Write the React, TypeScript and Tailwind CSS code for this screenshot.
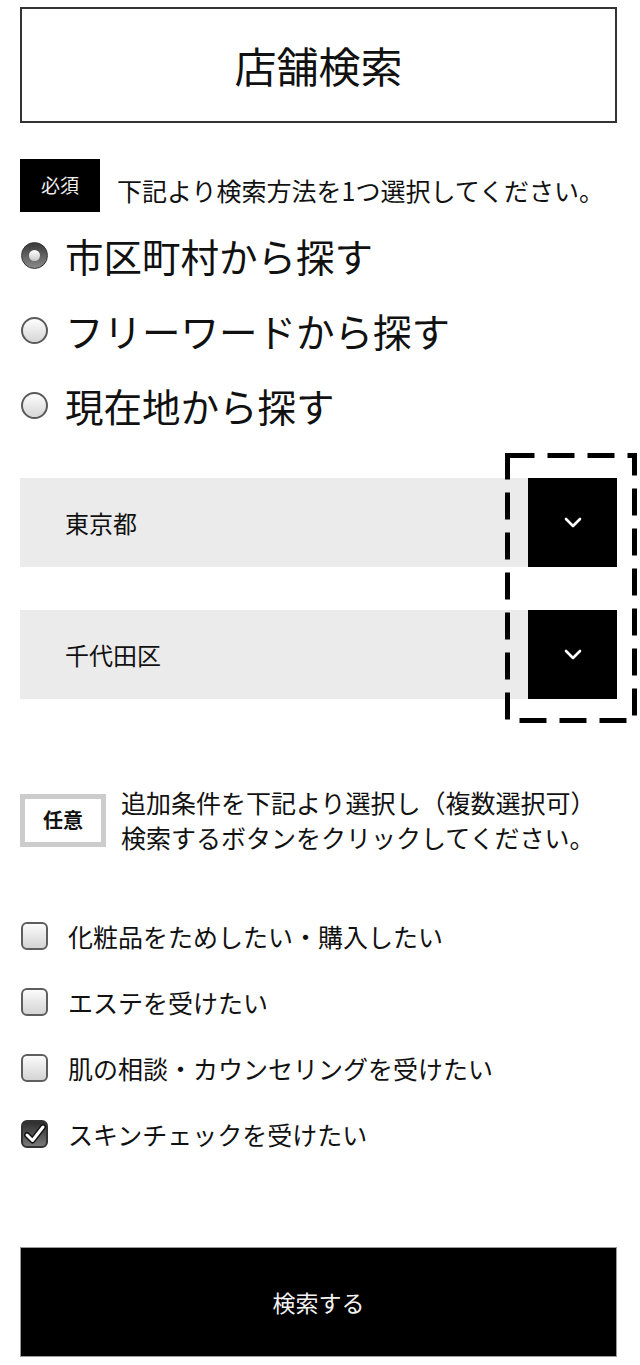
import React from "react";

const font = { fontFamily: '"Noto Sans CJK JP", "Noto Sans", sans-serif' };

function Radio({ checked }: { checked?: boolean }) {
  if (checked) {
    return (
      <span className="flex h-[27px] w-[27px] shrink-0 items-center justify-center rounded-full border border-[#333] bg-gradient-to-b from-[#3a3a3a] to-[#8a8a8a]">
        <span className="h-[11px] w-[11px] rounded-full bg-gradient-to-b from-[#ffffff] to-[#c8c8c8]" />
      </span>
    );
  }
  return (
    <span className="h-[27px] w-[27px] shrink-0 rounded-full border-2 border-[#5a5a5a] bg-gradient-to-b from-[#fdfdfd] to-[#d6d6d6]" />
  );
}

function Checkbox({ checked }: { checked?: boolean }) {
  if (checked) {
    return (
      <span className="flex h-[28px] w-[27px] shrink-0 items-center justify-center rounded-[6px] border-2 border-[#333] bg-gradient-to-b from-[#2e2e2e] to-[#7a7a7a]">
        <svg width="22" height="20" viewBox="0 0 22 20">
          <path d="M3 11 L8.5 16.5 L19 3" fill="none" stroke="#111" strokeWidth="6" strokeLinecap="round" strokeLinejoin="round" />
          <path d="M3 11 L8.5 16.5 L19 3" fill="none" stroke="#fff" strokeWidth="3" strokeLinecap="round" strokeLinejoin="round" />
        </svg>
      </span>
    );
  }
  return (
    <span className="h-[28px] w-[27px] shrink-0 rounded-[6px] border-2 border-[#5e5e5e] bg-gradient-to-b from-[#fbfbfb] to-[#d4d4d4]" />
  );
}

function Chevron() {
  return (
    <svg width="18" height="11" viewBox="0 0 18 11">
      <path d="M2 2 L9 9 L16 2" fill="none" stroke="#fff" strokeWidth="2.6" strokeLinecap="round" strokeLinejoin="round" />
    </svg>
  );
}

function Select({ label }: { label: string }) {
  return (
    <div className="flex h-[89px] w-full items-stretch bg-[#ebebeb]">
      <div className="flex flex-1 items-center pl-[45px] text-[24px] text-[#111]">{label}</div>
      <div className="flex w-[89px] items-center justify-center bg-black">
        <Chevron />
      </div>
    </div>
  );
}

export default function App() {
  const radios = [
    { label: "市区町村から探す", checked: true },
    { label: "フリーワードから探す", checked: false },
    { label: "現在地から探す", checked: false },
  ];
  const checks = [
    { label: "化粧品をためしたい・購入したい", checked: false },
    { label: "エステを受けたい", checked: false },
    { label: "肌の相談・カウンセリングを受けたい", checked: false },
    { label: "スキンチェックを受けたい", checked: true },
  ];
  return (
    <div className="w-[640px] bg-white pl-[20px] pr-[23px] pt-[7px] text-[#111]" style={font}>
      <div className="flex h-[116px] items-center justify-center border-2 border-[#333]">
        <span className="text-[42px] leading-none">店舗検索</span>
      </div>

      <div className="mt-[36px] flex items-center">
        <div className="flex h-[53px] w-[80px] shrink-0 items-center justify-center bg-black text-[19px] text-[#eee]">必須</div>
        <span className="ml-[17px] whitespace-nowrap pt-[10px] text-[25px] leading-none">下記より検索方法を1つ選択してください。</span>
      </div>

      <div className="mt-[6px] flex flex-col">
        {radios.map((r) => (
          <div key={r.label} className="flex h-[75px] items-center pl-[1px]">
            <Radio checked={r.checked} />
            <span className="ml-[17px] text-[38.5px] leading-none">{r.label}</span>
          </div>
        ))}
      </div>

      <div className="relative mt-[35px] flex flex-col gap-[43px]">
        <Select label="東京都" />
        <Select label="千代田区" />
        <svg className="pointer-events-none absolute left-[485px] top-[-25px]" width="132" height="270" viewBox="0 0 132 270">
          <rect x="2.5" y="2.5" width="127" height="265" fill="none" stroke="#000" strokeWidth="5" strokeDasharray="27 13" />
        </svg>
      </div>

      <div className="mt-[86px] flex items-center">
        <div className="flex h-[53px] w-[86px] shrink-0 items-center justify-center border-[5px] border-[#cccccc] bg-white text-[20px] font-bold">任意</div>
        <div className="ml-[15px] whitespace-nowrap text-[25px] leading-[35px]">
          <div>追加条件を下記より選択し（複数選択可）</div>
          <div>検索するボタンをクリックしてください。</div>
        </div>
      </div>

      <div className="mt-[48px] flex flex-col">
        {checks.map((c) => (
          <div key={c.label} className="flex h-[66px] items-center pl-[1px]">
            <Checkbox checked={c.checked} />
            <span className="ml-[20px] text-[25px] leading-none">{c.label}</span>
          </div>
        ))}
      </div>

      <div className="mt-[80px] flex h-[110px] items-center justify-center border border-[#999] bg-black text-[23px] text-[#f2f2f2]">
        検索する
      </div>
      <div className="h-[8px]" />
    </div>
  );
}
